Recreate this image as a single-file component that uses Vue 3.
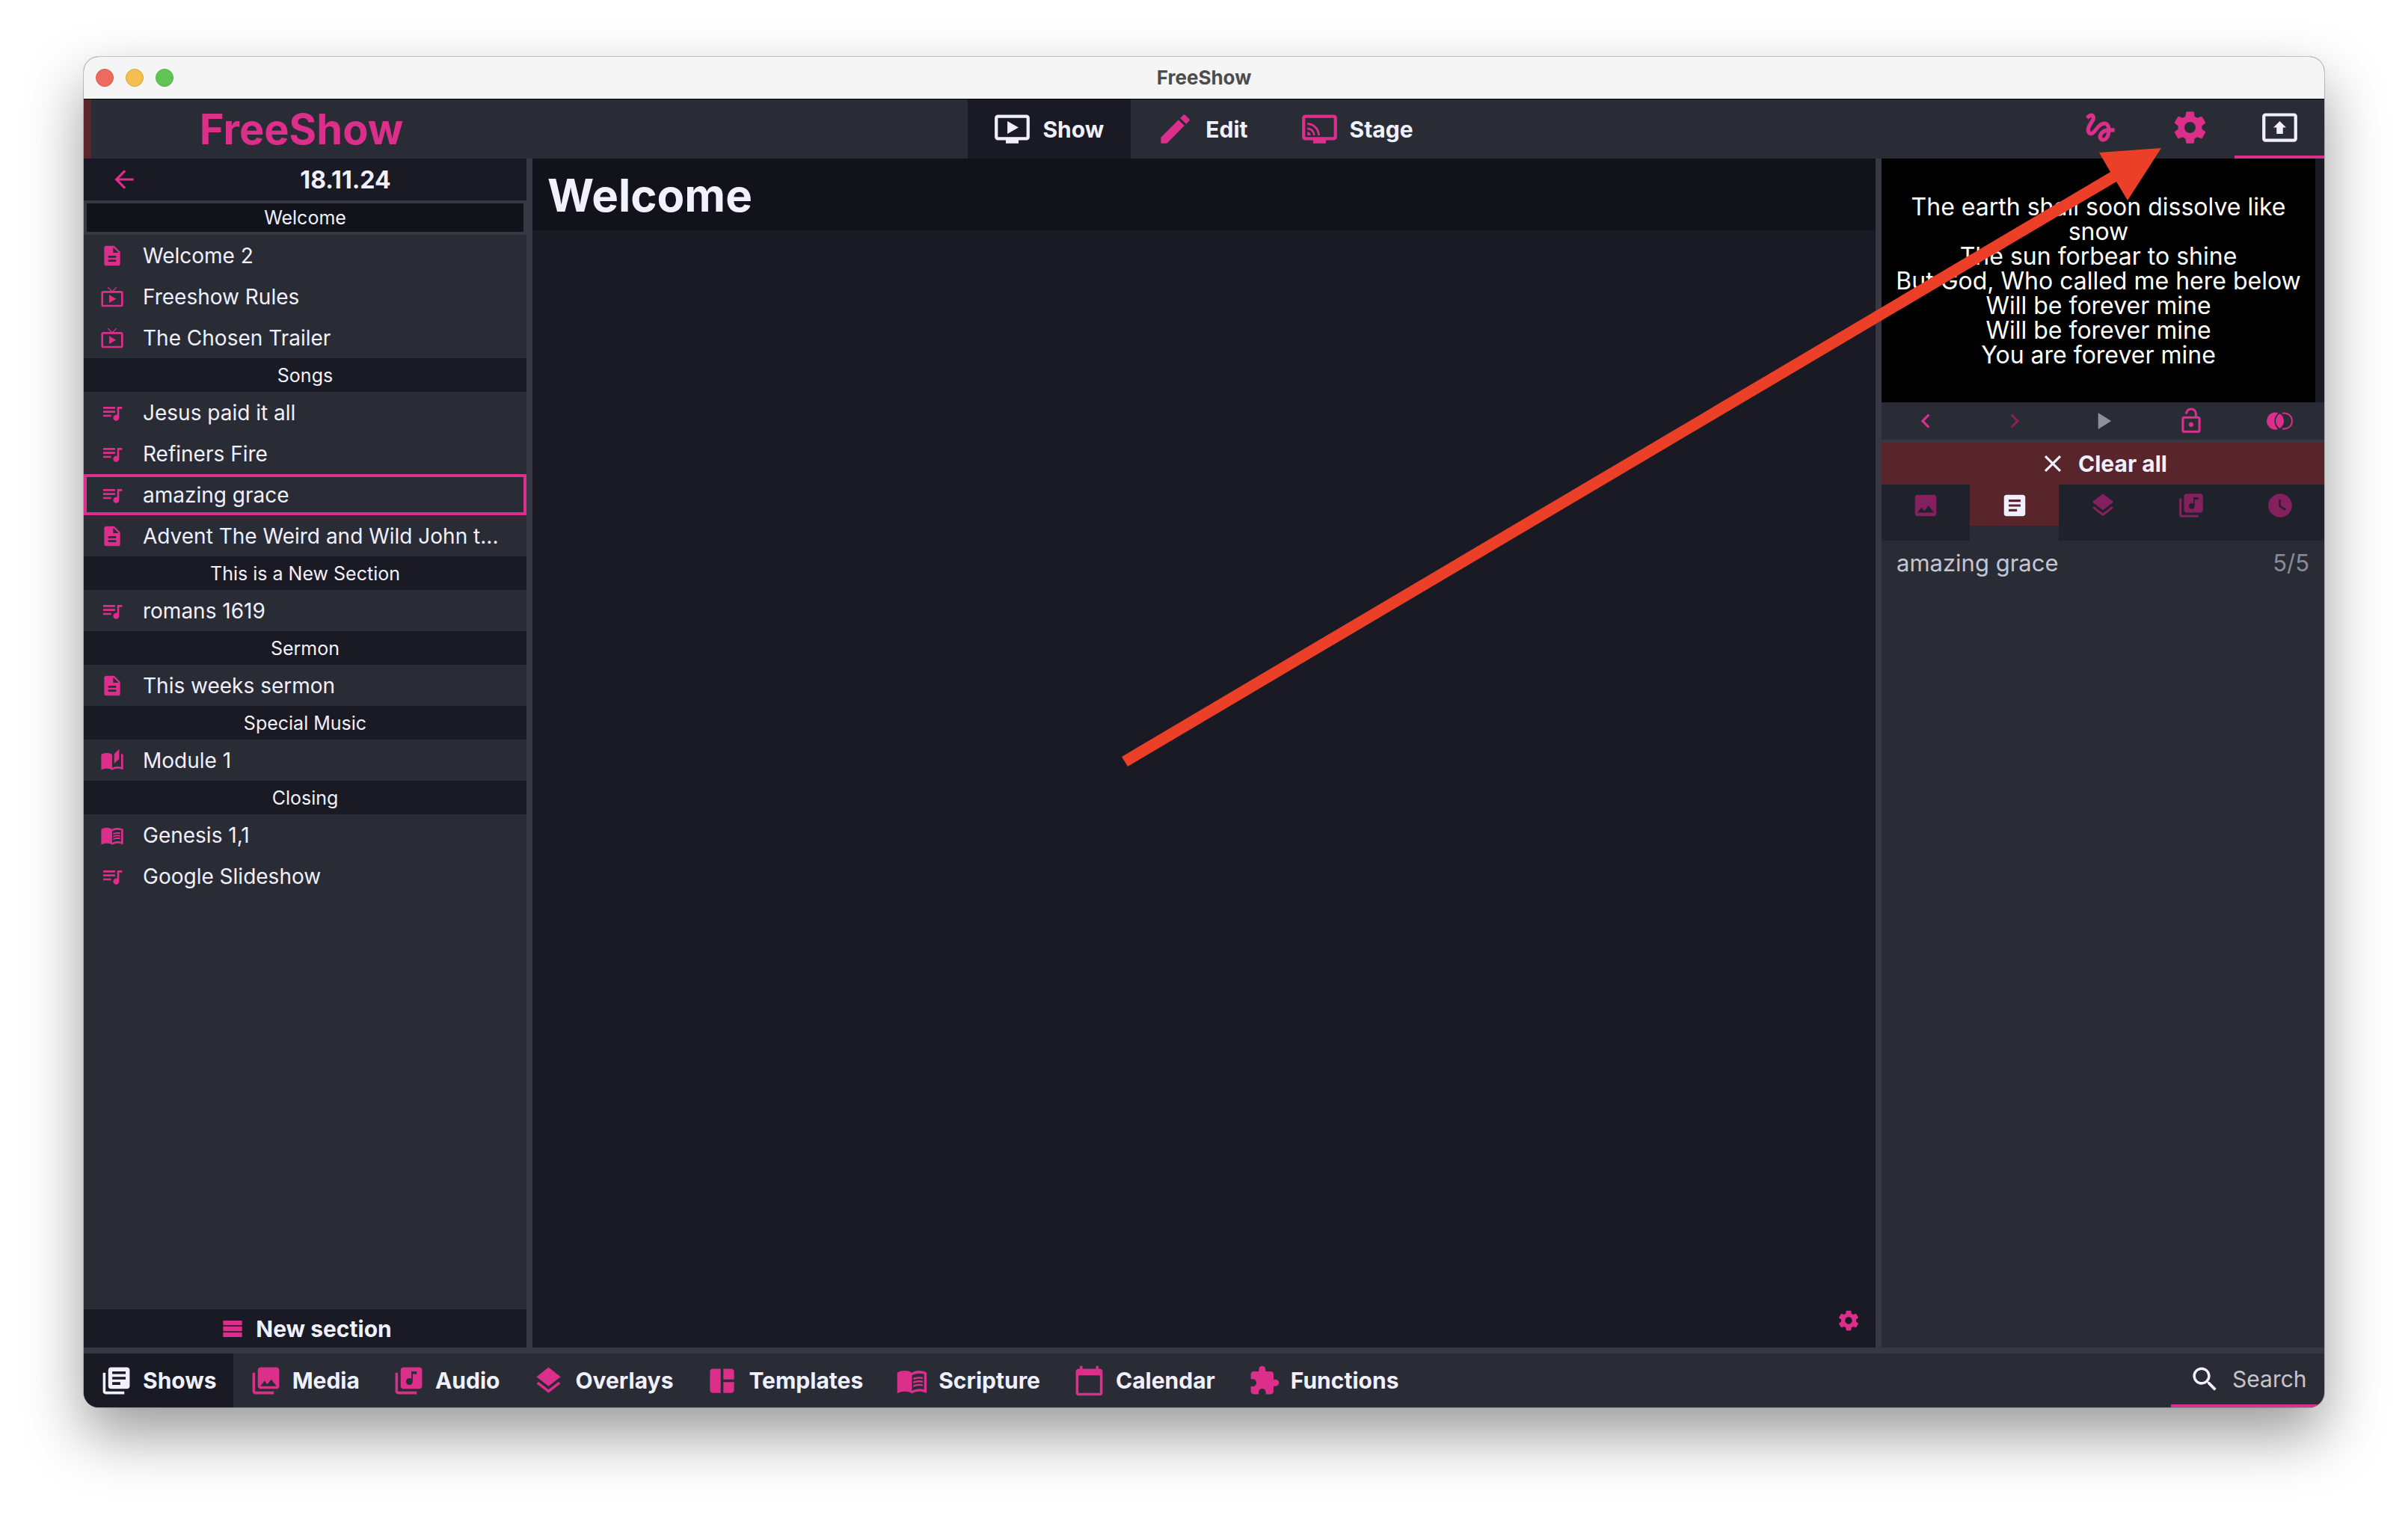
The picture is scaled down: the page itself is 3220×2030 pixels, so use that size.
<script setup>
import { ref } from 'vue'

const P = {
  doc: 'M14 2H6c-1.1 0-1.99.9-1.99 2L4 20c0 1.1.89 2 1.99 2H18c1.1 0 2-.9 2-2V8l-6-6zm2 16H8v-2h8v2zm0-4H8v-2h8v2zm-3-5V3.5L18.5 9H13z',
  tv: 'M21 6h-7.59l3.29-3.29L16 2l-4 4-4-4-.71.71L10.59 6H3c-1.1 0-2 .89-2 2v12c0 1.1.9 2 2 2h18c1.1 0 2-.9 2-2V8c0-1.11-.9-2-2-2zm0 14H3V8h18v12zM9 10v8l7-4z',
  song: 'M15 6H3v2h12V6zm0 4H3v2h12v-2zM3 16h8v-2H3v2zM17 6v8.18c-.31-.11-.65-.18-1-.18-1.66 0-3 1.34-3 3s1.34 3 3 3 3-1.34 3-3V8h3V6h-5z',
  stories: 'M19 .5l-5 5V15l5-4.5V.5zM12 6c-1.45-1.1-3.55-1.5-5.5-1.5S2.45 4.9 1 6v14.65c0 .25.25.5.5.5.1 0 .15-.05.25-.05C3.1 20.45 5.05 20 6.5 20c1.95 0 4.05.4 5.5 1.5 1.35-.85 3.8-1.5 5.5-1.5 1.65 0 3.35.3 4.75 1.05.1.05.15.05.25.05.25 0 .5-.25.5-.5V6c-.6-.45-1.25-.75-2-1v13.5c-1.1-.35-2.3-.5-3.5-.5-1.7 0-4.15.65-5.5 1.5V6z',
  book: 'M21 5c-1.11-.35-2.33-.5-3.5-.5-1.95 0-4.05.4-5.5 1.5-1.45-1.1-3.55-1.5-5.5-1.5S2.45 4.9 1 6v14.65c0 .25.25.5.5.5.1 0 .15-.05.25-.05C3.1 20.45 5.05 20 6.5 20c1.95 0 4.05.4 5.5 1.5 1.35-.85 3.8-1.5 5.5-1.5 1.65 0 3.35.3 4.75 1.05.1.05.15.05.25.05.25 0 .5-.25.5-.5V6c-.6-.45-1.25-.75-2-1zm0 13.5c-1.1-.35-2.3-.5-3.5-.5-1.7 0-4.15.65-5.5 1.5V8c1.35-.85 3.8-1.5 5.5-1.5 1.2 0 2.4.15 3.5.5v11.5zM17.5 10.5c.88 0 1.73.09 2.5.26V9.24c-.79-.15-1.64-.24-2.5-.24-1.7 0-3.24.29-4.5.83v1.66c1.13-.64 2.7-.99 4.5-.99zM13 12.49v1.66c1.13-.64 2.7-.99 4.5-.99.88 0 1.73.09 2.5.26V11.9c-.79-.15-1.64-.24-2.5-.24-1.7 0-3.24.3-4.5.83zM17.5 14.33c-1.7 0-3.24.29-4.5.83v1.66c1.13-.64 2.7-.99 4.5-.99.88 0 1.73.09 2.5.26v-1.52c-.79-.16-1.64-.24-2.5-.24z',
  back: 'M20 11H7.83l5.59-5.59L12 4l-8 8 8 8 1.41-1.41L7.83 13H20v-2z',
  show: 'M21 3H3c-1.11 0-2 .89-2 2v12c0 1.1.89 2 2 2h5v2h8v-2h5c1.1 0 1.99-.9 1.99-2L23 5c0-1.11-.9-2-2-2zm0 14H3V5h18v12zm-5-6l-7 4V7z',
  edit: 'M3 17.25V21h3.75L17.81 9.94l-3.75-3.75L3 17.25zM20.71 7.04c.39-.39.39-1.02 0-1.41l-2.34-2.34c-.39-.39-1.02-.39-1.41 0l-1.83 1.83 3.75 3.75 1.83-1.83z',
  stage: 'M21 3H3c-1.11 0-2 .89-2 2v12c0 1.1.89 2 2 2h5v2h8v-2h5c1.1 0 1.99-.9 1.99-2L23 5c0-1.11-.9-2-2-2zm0 14H3V5h18v12zM4.3 13.8V16h2.2c0-1.2-1-2.2-2.2-2.2zM4.3 11v1.3c2 0 3.7 1.7 3.7 3.7h1.2c0-2.8-2.2-5-4.9-5zM4.3 8.1v1.3c3.6 0 6.6 3 6.6 6.6h1.3c0-4.4-3.5-7.9-7.9-7.9z',
  draw: 'M4.59 6.89c.7-.71 1.4-1.35 1.71-1.22.5.2 0 1.03-.3 1.52-.25.42-2.86 3.89-2.86 6.31 0 1.28.48 2.34 1.34 2.98.75.56 1.74.73 2.64.46 1.07-.31 1.95-1.4 3.06-2.77 1.21-1.49 2.83-3.44 4.08-3.44 1.63 0 1.65 1.01 1.76 1.79-3.78.64-5.38 3.67-5.38 5.37 0 1.7 1.44 3.09 3.21 3.09 1.63 0 4.29-1.33 4.69-6.1H21v-2.5h-2.47c-.15-1.65-1.09-4.2-4.03-4.2-2.25 0-4.18 1.91-4.94 2.84-.58.73-2.06 2.48-2.29 2.72-.25.3-.68.84-1.11.84-.45 0-.72-.83-.36-1.92.35-1.09 1.4-2.86 1.85-3.52.78-1.14 1.3-1.92 1.3-3.28C8.95 3.69 7.31 3 6.44 3 5.12 3 3.97 4 3.72 4.25c-.36.36-.66.66-.88.93l1.75 1.71zm9.29 11.66c-.31 0-.74-.26-.74-.72 0-.6.73-2.2 2.87-2.76-.3 2.69-1.43 3.48-2.13 3.48z',
  gear: 'M19.43 12.98c.04-.32.07-.64.07-.98s-.03-.66-.07-.98l2.11-1.65c.19-.15.24-.42.12-.64l-2-3.46c-.12-.22-.39-.3-.61-.22l-2.49 1c-.52-.4-1.08-.73-1.69-.98l-.38-2.65C14.46 2.18 14.25 2 14 2h-4c-.25 0-.46.18-.49.42l-.38 2.65c-.61.25-1.17.59-1.69.98l-2.49-1c-.23-.09-.49 0-.61.22l-2 3.46c-.13.22-.07.49.12.64l2.11 1.65c-.04.32-.07.65-.07.98s.03.66.07.98l-2.11 1.65c-.19.15-.24.42-.12.64l2 3.46c.12.22.39.3.61.22l2.49-1c.52.4 1.08.73 1.69.98l.38 2.65c.03.24.24.42.49.42h4c.25 0 .46-.18.49-.42l.38-2.65c.61-.25 1.17-.59 1.69-.98l2.49 1c.23.09.49 0 .61-.22l2-3.46c.12-.22.07-.49-.12-.64l-2.11-1.65zM12 15.5c-1.93 0-3.5-1.57-3.5-3.5s1.57-3.5 3.5-3.5 3.5 1.57 3.5 3.5-1.57 3.5-3.5 3.5z',
  output: 'M21 3H3c-1.11 0-2 .89-2 2v14c0 1.11.89 2 2 2h18c1.11 0 2-.89 2-2V5c0-1.11-.89-2-2-2zm0 16.02H3V4.98h18v14.04zM10 12H8l4-4 4 4h-2v4h-4v-4z',
  prev: 'M15.41 7.41L14 6l-6 6 6 6 1.41-1.41L10.83 12z',
  next: 'M10 6L8.59 7.41 13.17 12l-4.58 4.59L10 18l6-6z',
  play: 'M8 5v14l11-7z',
  lock: 'M12 17c1.1 0 2-.9 2-2s-.9-2-2-2-2 .9-2 2 .9 2 2 2zm6-9h-1V6c0-2.76-2.24-5-5-5S7 3.24 7 6h1.9c0-1.71 1.39-3.1 3.1-3.1 1.71 0 3.1 1.39 3.1 3.1v2H6c-1.1 0-2 .9-2 2v10c0 1.1.9 2 2 2h12c1.1 0 2-.9 2-2V10c0-1.1-.9-2-2-2zm0 12H6V10h12v10z',
  close: 'M19 6.41L17.59 5 12 10.59 6.41 5 5 6.41 10.59 12 5 17.59 6.41 19 12 13.41 17.59 19 19 17.59 13.41 12z',
  image: 'M21 19V5c0-1.1-.9-2-2-2H5c-1.1 0-2 .9-2 2v14c0 1.1.9 2 2 2h14c1.1 0 2-.9 2-2zM8.5 13.5l2.5 3.01L14.5 12l4.5 6H5l3.5-4.5z',
  article: 'M19 3H5c-1.1 0-2 .9-2 2v14c0 1.1.9 2 2 2h14c1.1 0 2-.9 2-2V5c0-1.1-.9-2-2-2zm-5 14H7v-2h7v2zm3-4H7v-2h10v2zm0-4H7V7h10v2z',
  layers: 'M11.99 18.54l-7.37-5.73L3 14.07l9 7 9-7-1.63-1.27-7.38 5.74zM12 16l7.36-5.73L21 9l-9-7-9 7 1.63 1.27L12 16z',
  music: 'M20 2H8c-1.1 0-2 .9-2 2v12c0 1.1.9 2 2 2h12c1.1 0 2-.9 2-2V4c0-1.1-.9-2-2-2zm-2 5h-3v5.5c0 1.38-1.12 2.5-2.5 2.5S10 13.88 10 12.5s1.12-2.5 2.5-2.5c.57 0 1.08.19 1.5.51V5h4v2zM4 6H2v14c0 1.1.9 2 2 2h14v-2H4V6z',
  clock: 'M12 2C6.5 2 2 6.5 2 12s4.5 10 10 10 10-4.5 10-10S17.5 2 12 2zm4.2 14.2L11 13V7h1.5v5.2l4.5 2.7-.8 1.3z',
  books: 'M4 6H2v14c0 1.1.9 2 2 2h14v-2H4V6zm16-4H8c-1.1 0-2 .9-2 2v12c0 1.1.9 2 2 2h12c1.1 0 2-.9 2-2V4c0-1.1-.9-2-2-2zm-1 9H9V9h10v2zm-4 4H9v-2h6v2zm4-8H9V5h10v2z',
  photos: 'M22 16V4c0-1.1-.9-2-2-2H8c-1.1 0-2 .9-2 2v12c0 1.1.9 2 2 2h12c1.1 0 2-.9 2-2zm-11-4l2.03 2.71L16 11l4 5H8l3-4zM2 6v14c0 1.1.9 2 2 2h14v-2H4V6H2z',
  template: 'M11 21H5c-1.1 0-2-.9-2-2V5c0-1.1.9-2 2-2h6v18zM13 21h6c1.1 0 2-.9 2-2v-6h-8v8zM21 11V5c0-1.1-.9-2-2-2h-6v8h8z',
  calendar: 'M20 3h-1V1h-2v2H7V1H5v2H4c-1.1 0-2 .9-2 2v16c0 1.1.9 2 2 2h16c1.1 0 2-.9 2-2V5c0-1.1-.9-2-2-2zm0 18H4V8h16v13z',
  puzzle: 'M20.5 11H19V7c0-1.1-.9-2-2-2h-4V3.5C13 2.12 11.88 1 10.5 1S8 2.12 8 3.5V5H4c-1.1 0-1.99.9-1.99 2v3.8H3.5c1.49 0 2.7 1.21 2.7 2.7s-1.21 2.7-2.7 2.7H2V20c0 1.1.9 2 2 2h3.8v-1.5c0-1.49 1.21-2.7 2.7-2.7 1.49 0 2.7 1.21 2.7 2.7V22H17c1.1 0 2-.9 2-2v-4h1.5c1.38 0 2.5-1.12 2.5-2.5S21.88 11 20.5 11z',
  search: 'M15.5 14h-.79l-.28-.27C15.41 12.59 16 11.11 16 9.5 16 5.91 13.09 3 9.5 3S3 5.91 3 9.5 5.91 16 9.5 16c1.61 0 3.09-.59 4.23-1.57l.27.28v.79l5 4.99L20.49 19l-4.99-5zm-6 0C7.01 14 5 11.99 5 9.5S7.01 5 9.5 5 14 7.01 14 9.5 11.99 14 9.5 14z',
  section: 'M4 5h16v4H4zM4 10h16v4H4zM4 15h16v4H4z',
}

const groups = [
  { title: 'Welcome', active: true, items: [['doc', 'Welcome 2'], ['tv', 'Freeshow Rules'], ['tv', 'The Chosen Trailer']] },
  { title: 'Songs', items: [['song', 'Jesus paid it all'], ['song', 'Refiners Fire'], ['song', 'amazing grace'], ['doc', 'Advent The Weird and Wild John t...']] },
  { title: 'This is a New Section', items: [['song', 'romans 1619']] },
  { title: 'Sermon', items: [['doc', 'This weeks sermon']] },
  { title: 'Special Music', items: [['stories', 'Module 1']] },
  { title: 'Closing', items: [['book', 'Genesis 1,1'], ['song', 'Google Slideshow']] },
]
const pages = [['show', 'Show'], ['edit', 'Edit'], ['stage', 'Stage']]
const drawers = [
  ['books', 'Shows'], ['photos', 'Media'], ['music', 'Audio'], ['layers', 'Overlays'],
  ['template', 'Templates'], ['book', 'Scripture'], ['calendar', 'Calendar'], ['puzzle', 'Functions'],
]
const layersTabs = [['image', 'Background'], ['article', 'Slide'], ['layers', 'Overlays'], ['music', 'Audio'], ['clock', 'Timers']]
const lyrics = [
  'The earth shall soon dissolve like snow', 'The sun forbear to shine', 'But God, Who called me here below',
  'Will be forever mine', 'Will be forever mine', 'You are forever mine',
]

const page = ref('Show')
const drawer = ref('Shows')
const layer = ref('Slide')
const current = ref('amazing grace')
const query = ref('')
</script>

<template>
  <div class="desktop">
    <div class="window">
      <header class="titlebar">
        <div class="lights">
          <button class="light red" aria-label="Close"></button>
          <button class="light yellow" aria-label="Minimize"></button>
          <button class="light green" aria-label="Zoom"></button>
        </div>
        <span class="window-title">FreeShow</span>
      </header>

      <div class="topbar">
        <div class="brand"><span>FreeShow</span></div>
        <nav class="pages">
          <button v-for="[icon, name] in pages" :key="name" class="page" :class="{ active: page === name }" @click="page = name">
            <svg class="icon xl" viewBox="0 0 24 24"><path :d="P[icon]" /></svg>
            <span>{{ name }}</span>
          </button>
        </nav>
        <div class="tools">
          <button class="tool" aria-label="Draw"><svg class="icon xl" viewBox="0 0 24 24"><path :d="P.draw" /></svg></button>
          <button class="tool" aria-label="Settings"><svg class="icon xl" viewBox="0 0 24 24"><path :d="P.gear" /></svg></button>
          <button class="tool on" aria-label="Output"><svg class="icon xl" viewBox="0 0 24 24"><path :d="P.output" /></svg></button>
        </div>
      </div>

      <div class="main">
        <aside class="project">
          <div class="project-head">
            <button class="back" aria-label="Back"><svg class="icon md" viewBox="0 0 24 24"><path :d="P.back" /></svg></button>
            <h2>18.11.24</h2>
          </div>
          <div class="list">
            <template v-for="g in groups" :key="g.title">
              <button class="section" :class="{ active: g.active }">{{ g.title }}</button>
              <button v-for="[icon, name] in g.items" :key="name" class="item" :class="{ selected: current === name }" @click="current = name">
                <svg class="icon sm" viewBox="0 0 24 24"><path :d="P[icon]" /></svg>
                <span>{{ name }}</span>
              </button>
            </template>
          </div>
          <button class="new-section">
            <svg class="icon md" viewBox="0 0 24 24"><path :d="P.section" /></svg>
            <span>New section</span>
          </button>
        </aside>

        <main class="center">
          <h1>Welcome</h1>
          <div class="canvas">
            <button class="options" aria-label="Section settings"><svg class="icon sm" viewBox="0 0 24 24"><path :d="P.gear" /></svg></button>
          </div>
        </main>

        <aside class="output">
          <div class="preview">
            <div class="slide"><p v-for="(line, i) in lyrics" :key="i">{{ line }}</p></div>
          </div>
          <div class="controls">
            <button aria-label="Previous"><svg class="icon md" viewBox="0 0 24 24"><path :d="P.prev" /></svg></button>
            <button class="dim" aria-label="Next"><svg class="icon md" viewBox="0 0 24 24"><path :d="P.next" /></svg></button>
            <button class="grey" aria-label="Play"><svg class="icon md" viewBox="0 0 24 24"><path :d="P.play" /></svg></button>
            <button aria-label="Lock"><svg class="icon md" viewBox="0 0 24 24"><path :d="P.lock" /></svg></button>
            <button aria-label="Transition">
              <svg class="transition" viewBox="0 0 35 24">
                <path d="M15.5 1.2A11.5 11.5 0 1 0 15.5 22.8A14 14 0 0 1 15.5 1.2z" />
                <path d="M17.5 2.2A11.5 11.5 0 0 1 17.5 21.8A11.5 11.5 0 0 1 17.5 2.2z" />
                <path class="line" d="M21 1.8A10.5 10.5 0 1 1 21 22.2" />
              </svg>
            </button>
          </div>
          <button class="clear">
            <svg class="icon md" viewBox="0 0 24 24"><path :d="P.close" /></svg>
            <span>Clear all</span>
          </button>
          <div class="layers">
            <div v-for="[icon, name] in layersTabs" :key="name" class="layer" :class="{ active: layer === name }">
              <button :aria-label="name" @click="layer = name"><svg class="icon md" viewBox="0 0 24 24"><path :d="P[icon]" /></svg></button>
            </div>
          </div>
          <div class="status"><span>amazing grace</span><span class="count">5/5</span></div>
        </aside>
      </div>

      <footer class="drawer">
        <button v-for="[icon, name] in drawers" :key="name" class="tab" :class="{ active: drawer === name }" @click="drawer = name">
          <svg class="icon lg" viewBox="0 0 24 24"><path :d="P[icon]" /></svg>
          <span>{{ name }}</span>
        </button>
        <label class="search">
          <svg class="icon lg" viewBox="0 0 24 24"><path :d="P.search" /></svg>
          <input v-model="query" type="text" placeholder="Search" aria-label="Search" />
        </label>
      </footer>
    </div>

    <svg class="pointer" viewBox="0 0 1392 830" aria-hidden="true">
      <path d="M1390 1L1307 7L1322 33L0 815L8 828L1330 46L1345 71z" />
    </svg>
  </div>
</template>

<style>
body { margin: 0; background: #fff; }
</style>

<style scoped>
.desktop {
  --primary: #292c35;
  --darker: #191a23;
  --darkest: #11121a;
  --lighter: #363844;
  --text: #f0f0ff;
  --accent: #dc2f8c;
  position: relative;
  box-sizing: border-box;
  min-height: 100vh;
  padding: 76px 112px 148px;
  display: flex;
  font-family: Inter, "Liberation Sans", sans-serif;
  font-size: 28px;
  color: var(--text);
  background: #fff;
}
.desktop * { box-sizing: border-box; }
button {
  border: 0;
  padding: 0;
  background: none;
  font: inherit;
  color: inherit;
  display: flex;
  align-items: center;
}
h1, h2, p { margin: 0; }
.icon { fill: var(--accent); flex: none; display: block; }
.sm { width: 32px; height: 32px; }
.md { width: 38px; height: 38px; }
.lg { width: 43px; height: 43px; }
.xl { width: 51px; height: 51px; }

.window {
  flex: 1;
  min-width: 0;
  display: flex;
  flex-direction: column;
  border-radius: 20px;
  overflow: hidden;
  background: var(--primary);
  box-shadow: 0 0 0 1px rgba(0, 0, 0, .2), 0 36px 80px rgba(0, 0, 0, .4);
}
.titlebar {
  flex: none;
  height: 56px;
  display: grid;
  grid-template-columns: 1fr auto 1fr;
  align-items: center;
  padding: 0 16px;
  background: #f5f5f5;
}
.lights { display: flex; gap: 16px; }
.light { width: 24px; height: 24px; border-radius: 50%; border: 1px solid; }
.red { background: #ed6a5e; border-color: #d8564b; }
.yellow { background: #f5bf4f; border-color: #d9a43c; }
.green { background: #61c554; border-color: #4fab43; }
.window-title { color: #4c4c4c; font-weight: 700; font-size: 26px; line-height: 28px; }

.topbar {
  flex: none;
  height: 80px;
  display: grid;
  grid-template-columns: 1fr auto 1fr;
  border-top: 1px solid #000;
}
.brand {
  display: flex;
  align-items: center;
  border-left: 10px solid #5a262b;
  color: var(--accent);
  font-size: 56px;
  font-weight: 700;
}
.brand span { width: 562px; text-align: center; }
.pages { display: flex; font-size: 30px; font-weight: 700; }
.page { gap: 15px; padding: 0 36px 0 34px; }
.tools { display: flex; justify-content: flex-end; }
.tool { width: 120px; justify-content: center; border-bottom: 4px solid transparent; }
.tool.on { border-color: var(--accent); }
.tool.on .icon, .active .icon { fill: var(--text); }
.page.active, .tab.active { background: var(--darker); }

.main {
  flex: 1;
  min-height: 0;
  display: grid;
  grid-template-columns: 592px 1fr 592px;
  gap: 8px;
  background: var(--lighter);
}
.project { display: flex; flex-direction: column; background: var(--primary); min-width: 0; }
.project-head { display: flex; height: 56px; background: var(--darker); align-items: center; }
.back { width: 108px; justify-content: center; }
h2 { flex: 1; text-align: center; font-size: 32px; font-weight: 700; }
.list { flex: 1; display: flex; flex-direction: column; }
.section {
  height: 45px;
  justify-content: center;
  background: var(--darker);
  font-size: 25px;
}
.section.active { height: 46px; border: 4px solid var(--lighter); background: var(--darkest); }
.item { height: 55px; padding: 0 22px; gap: 25px; }
.item.selected { outline: 4px solid var(--accent); outline-offset: -4px; }
.item span { flex: 1; min-width: 0; text-align: left; white-space: nowrap; overflow: hidden; text-overflow: ellipsis; line-height: 40px; }
.new-section { height: 51px; justify-content: center; gap: 12px; background: var(--darker); font-size: 30px; font-weight: 700; }

.center { display: flex; flex-direction: column; background: var(--darker); min-width: 0; }
h1 { height: 96px; padding: 0 20px; background: var(--darkest); font-size: 60px; font-weight: 700; line-height: 98px; }
.canvas { flex: 1; display: flex; align-items: flex-end; justify-content: flex-end; padding: 20px; }

.output { background: var(--primary); min-width: 0; }
.preview { background: var(--darker); padding-right: 12px; }
.slide {
  aspect-ratio: 580 / 326;
  display: flex;
  flex-direction: column;
  justify-content: center;
  padding: 0 12px;
  background: #000;
  color: #fff;
  text-align: center;
  font-size: 32px;
  line-height: 33px;
}
.controls, .layers { display: grid; grid-template-columns: repeat(5, 1fr); }
.controls { height: 54px; border-bottom: 4px solid var(--lighter); }
.controls button { justify-content: center; }
.dim .icon { fill: #85205f; }
.grey .icon { fill: #8f909c; }
.transition { width: 35px; height: 24px; fill: var(--accent); }
.line { fill: none; stroke: var(--accent); stroke-width: 2; }
.clear { width: 100%; height: 56px; justify-content: center; gap: 15px; background: #58252b; font-size: 30px; font-weight: 700; }
.clear .icon { fill: var(--text); }
.layer { height: 75px; background: #20222b; }
.layer button { width: 100%; height: 55px; justify-content: center; }
.layer .icon { fill: #85205f; }
.layer.active { background: none; }
.layer.active button { background: #58252b; }
.layer.active .icon { fill: var(--text); }
.status { display: flex; justify-content: space-between; padding: 10px 20px; font-size: 31px; line-height: 40px; color: #c5c5d2; }
.count { color: #8a8b97; }

.drawer { flex: none; height: 80px; display: flex; border-top: 8px solid var(--lighter); }
.tab { gap: 14px; padding: 0 22px; font-size: 30px; font-weight: 700; }
.search {
  margin-left: auto;
  width: 205px;
  display: flex;
  align-items: center;
  gap: 15px;
  padding: 0 20px 0 24px;
  border-bottom: 4px solid var(--accent);
}
.search .icon { fill: var(--text); }
input { flex: 1; min-width: 0; width: 0; padding: 0; border: 0; outline: 0; background: none; font: inherit; font-size: 30px; color: var(--text); }
input::placeholder { color: #c5c5d2; opacity: 1; }

.pointer { position: absolute; left: 1500px; top: 197px; width: 1392px; height: 830px; fill: #eb4027; pointer-events: none; overflow: visible; }
</style>
